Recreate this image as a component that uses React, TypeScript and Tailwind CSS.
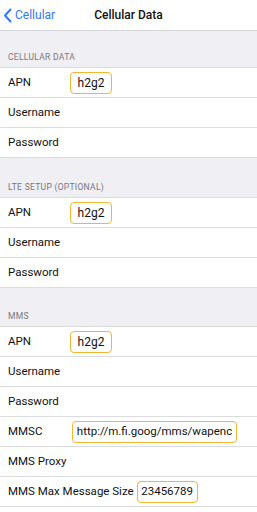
import React from "react";

const font = { fontFamily: "Roboto, 'Liberation Sans', sans-serif" };

function Box({ text, w, size }: { text: string; w: string; size?: string }) {
  return (
    <div className={`h-[22px] ${w} border border-[#f2b632] rounded-[4px] flex items-center justify-center ${size ?? "text-[12px]"} text-[#111] bg-white whitespace-nowrap overflow-hidden`}>
      {text}
    </div>
  );
}

function Row({ label, labelW, children, last }: { label: string; labelW?: string; children?: React.ReactNode; last?: boolean }) {
  return (
    <div className={`h-[30px] flex items-center bg-white ${last ? "border-b border-[#dcdce0]" : ""}`}>
      <div className={`flex items-center h-full w-full pl-[8px] ${last ? "" : "border-b border-[#dcdce0]"}`}>
        <span className={`text-[11.5px] text-[#111] whitespace-nowrap ${labelW ?? ""}`}>{label}</span>
        {children}
      </div>
    </div>
  );
}

function Header({ text, h }: { text: string; h: string }) {
  return (
    <div className={`${h} bg-[#efeff4] flex items-end pl-[8px] pb-[3px] border-b border-[#dcdce0]`}>
      <span className="text-[8.5px] text-[#77777c] tracking-[0.3px]">{text}</span>
    </div>
  );
}

export default function App() {
  return (
    <div className="w-[257px] h-[512px] bg-white overflow-hidden" style={font}>
      <div className="h-[31px] flex items-center relative border-b border-[#d8d8dc] bg-white">
        <div className="flex items-center pl-[3px]">
          <svg width="9" height="15" viewBox="0 0 9 15" fill="none">
            <path d="M7.5 1.5L2 7.5l5.5 6" stroke="#3478f6" strokeWidth="2" strokeLinecap="round" strokeLinejoin="round" />
          </svg>
          <span className="text-[12px] ml-[3px] text-[#3478f6]">Cellular</span>
        </div>
        <div className="absolute left-0 right-0 text-center text-[12px] font-medium text-[#111] pointer-events-none">
          Cellular Data
        </div>
      </div>
      <Header text="CELLULAR DATA" h="h-[37px]" />
      <Row label="APN" labelW="w-[62px]">
        <Box text="h2g2" w="w-[42px]" />
      </Row>
      <Row label="Username" />
      <Row label="Password" last />
      <Header text="LTE SETUP (OPTIONAL)" h="h-[40px]" />
      <Row label="APN" labelW="w-[62px]">
        <Box text="h2g2" w="w-[42px]" />
      </Row>
      <Row label="Username" />
      <Row label="Password" last />
      <Header text="MMS" h="h-[39px]" />
      <Row label="APN" labelW="w-[62px]">
        <Box text="h2g2" w="w-[42px]" />
      </Row>
      <Row label="Username" />
      <Row label="Password" />
      <Row label="MMSC" labelW="w-[64px]">
        <Box text="http://m.fi.goog/mms/wapenc" w="w-[165px]" size="text-[11.5px]" />
      </Row>
      <Row label="MMS Proxy" />
      <Row label="MMS Max Message Size">
        <div className="ml-[3px]"><Box text="23456789" w="w-[61px]" size="text-[11.5px]" /></div>
      </Row>
    </div>
  );
}
